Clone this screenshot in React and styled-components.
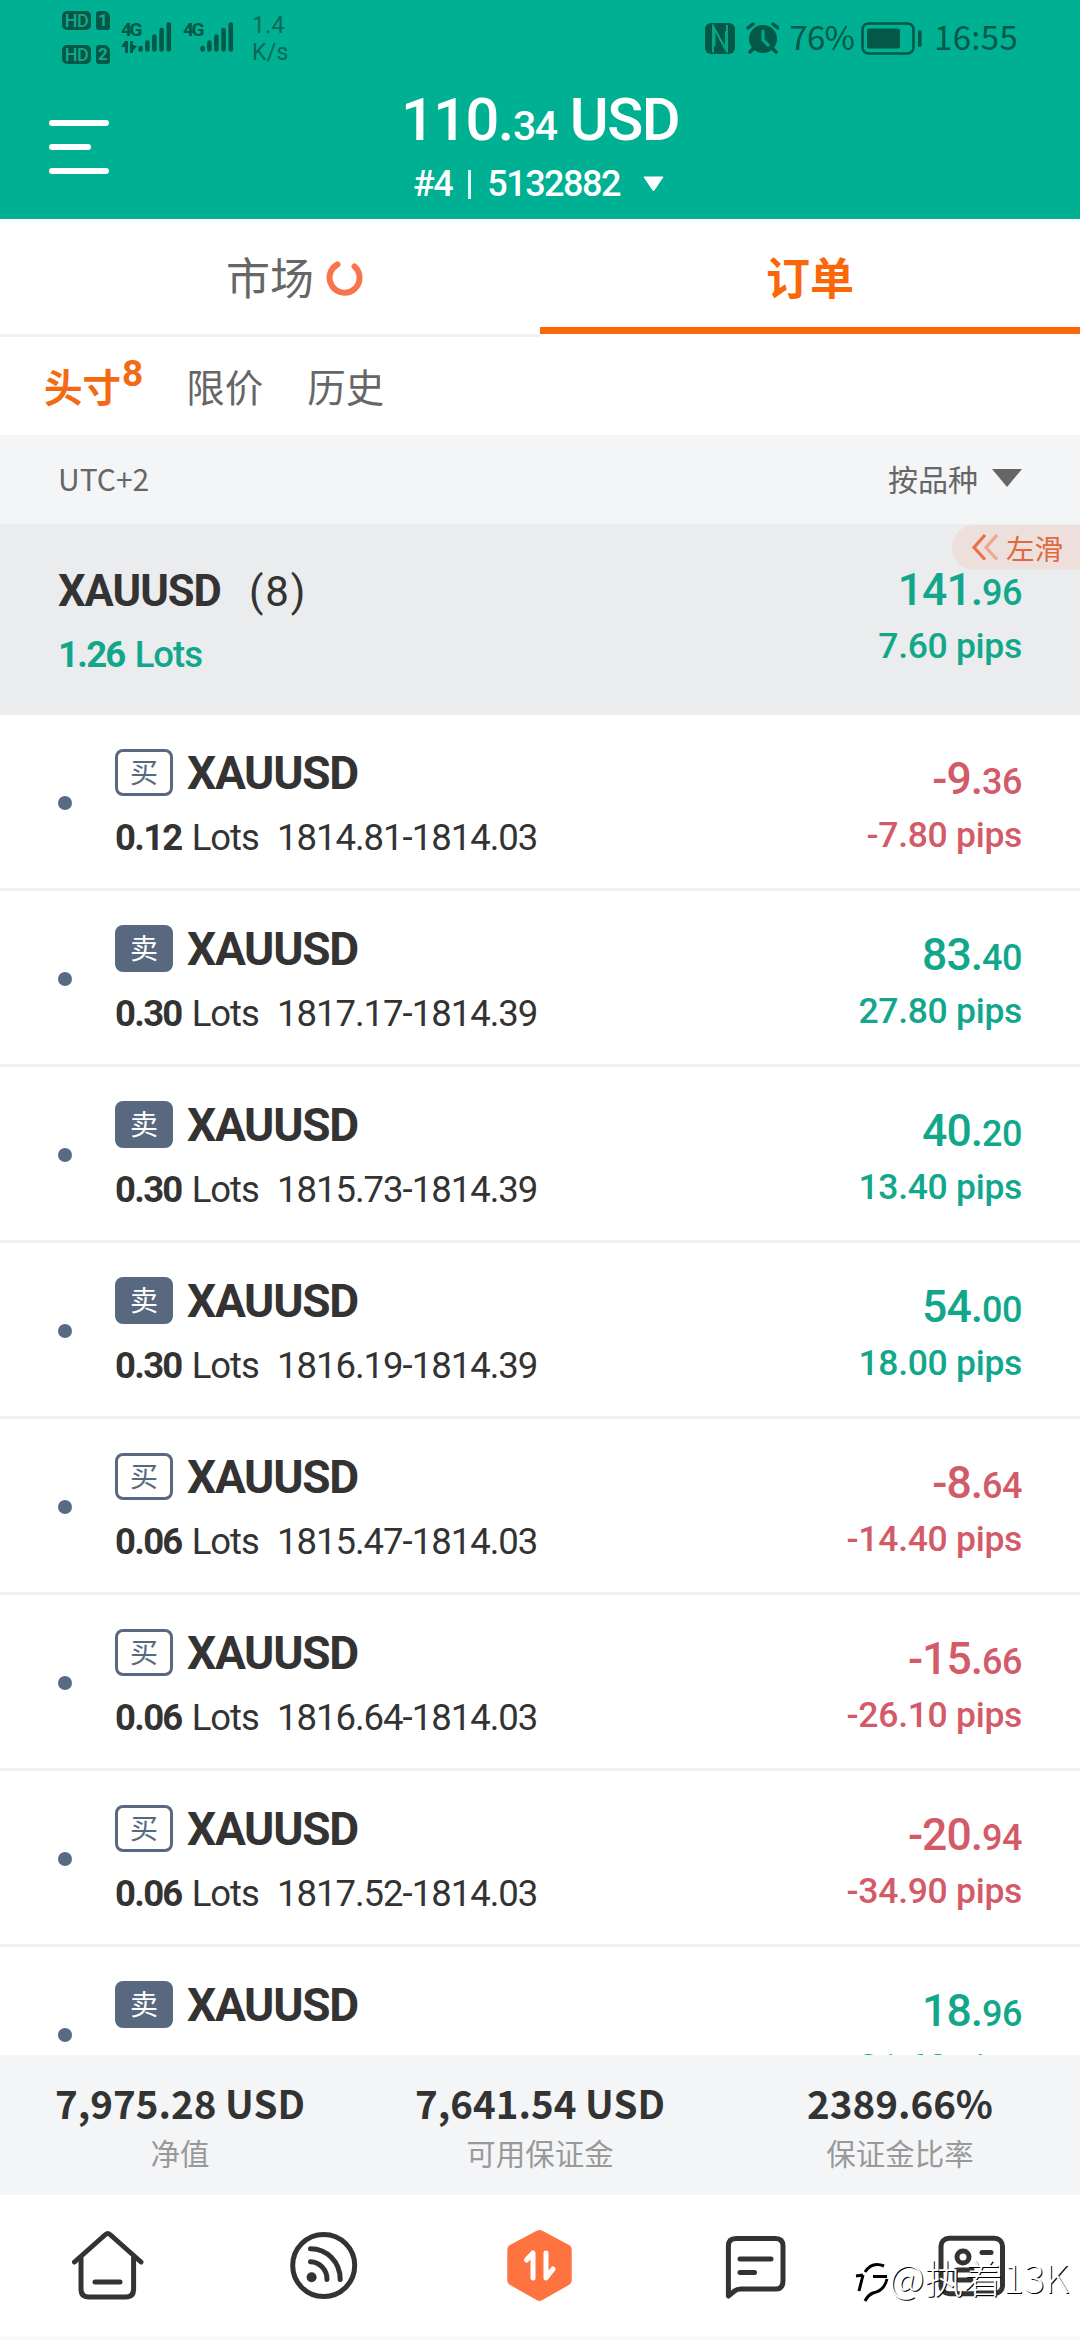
import React from "react";
import styled, { createGlobalStyle } from "styled-components";

const GlobalStyle = createGlobalStyle`
	* {
		box-sizing: border-box;
	}
	body {
		margin: 0;
		background-color: white;
	}
`;

const latin = `Roboto, "Noto Sans CJK SC", sans-serif`;
const cjk = `"Noto Sans CJK SC", sans-serif`;

const green = "#12a78b";
const red = "#d35a68";
const orange = "#fa6608";
const slate = "#58697f";
const ink = "#333333";

const Screen = styled.div`
	width: 1080px;
	height: 2340px;
	display: flex;
	flex-direction: column;
	overflow: hidden;
	background-color: white;
	font-family: ${latin};
	color: ${ink};
	white-space: nowrap;
`;

const Header = styled.header`
	height: 219px;
	flex: none;
	background-color: #00b093;
	color: white;
`;

const StatusBar = styled.div`
	height: 84px;
	padding: 11px 62px 0 62px;
	display: flex;
	align-items: flex-start;
	color: #045847;
`;

const SimColumn = styled.div`
	display: grid;
	grid-template-columns: 29px 14px;
	gap: 15px 5px;
	margin-right: 11px;
`;

const SimTag = styled.span`
	height: 19px;
	border-radius: ${(props) => (props.$card ? "3px 6px 3px 3px" : "5px")};
	background-color: #045847;
	color: #14a98c;
	font-size: ${(props) => (props.$card ? "17px" : "18px")};
	font-weight: ${(props) => (props.$card ? 700 : 500)};
	line-height: 19px;
	text-align: center;
	letter-spacing: ${(props) => (props.$card ? "0" : "-0.5px")};
`;

const Signal = styled.div`
	display: flex;
	margin-top: 11px;
	margin-right: ${(props) => props.$after};
	svg {
		display: block;
	}
`;

const NetType = styled.div`
	width: ${(props) => props.$w};
	font-size: 19px;
	font-weight: 700;
	line-height: 15px;
	letter-spacing: -2.5px;
	svg {
		margin-top: 4px;
	}
`;

const Speed = styled.div`
	margin-top: 1px;
	font-size: 23px;
	line-height: 27px;
	letter-spacing: 0.3px;
	color: #066a56;
`;

const StatusRight = styled.div`
	margin-left: auto;
	margin-top: 9px;
	height: 36px;
	display: flex;
	align-items: center;
	font-family: ${cjk};
	font-size: 33px;
	line-height: 32px;
	svg {
		display: block;
		flex: none;
	}
`;

const StatusText = styled.span`
	margin: 0 ${(props) => props.$r} 5px ${(props) => props.$l};
	letter-spacing: ${(props) => props.$spacing};
`;

const HeaderMain = styled.div`
	display: grid;
	grid-template-columns: 200px 1fr 200px;
`;

const Menu = styled.button`
	display: flex;
	flex-direction: column;
	gap: 18px;
	margin: 36px 0 0 49px;
	padding: 0;
	border: none;
	background: none;
	span {
		width: 60px;
		height: 6px;
		border-radius: 3px;
		background-color: white;
	}
	span:nth-child(2) {
		width: 42px;
	}
`;

const Account = styled.div`
	display: flex;
	flex-direction: column;
	align-items: center;
`;

const Balance = styled.div`
	font-size: 59.5px;
	font-weight: 500;
	line-height: 72px;
	letter-spacing: -1.5px;
	small {
		font-size: 41px;
		line-height: 1;
	}
`;

const AccountLine = styled.div`
	display: flex;
	align-items: center;
	margin-top: 6px;
	padding-right: 2px;
	font-size: 36px;
	font-weight: 500;
	line-height: 44px;
	letter-spacing: -1.5px;
	i {
		width: 3px;
		height: 29px;
		margin: 0 16px;
		background-color: #d9fff8;
	}
	svg {
		margin-left: 22px;
	}
`;

const Tabs = styled.nav`
	display: grid;
	grid-template-columns: 1fr 1fr;
	height: 118px;
	flex: none;
`;

const Tab = styled.div`
	display: flex;
	justify-content: center;
	height: ${(props) => (props.$active ? "115px" : "118px")};
	border-bottom: ${(props) =>
		props.$active ? `7px solid ${orange}` : "3px solid #f1f1f1"};
	font-family: ${cjk};
	font-size: 44px;
	font-weight: ${(props) => (props.$active ? 700 : 400)};
	line-height: 114px;
	color: ${(props) => (props.$active ? orange : "#666666")};
	div {
		position: relative;
	}
	svg {
		position: absolute;
		left: 100px;
		top: 40px;
	}
`;

const SubTabs = styled.div`
	display: flex;
	height: 98px;
	flex: none;
	padding-left: 44px;
	font-family: ${cjk};
	font-size: 38.5px;
	line-height: 96px;
	color: #666666;
`;

const SubTab = styled.div`
	display: flex;
	margin-right: ${(props) => (props.$active ? "43px" : "44px")};
	color: ${(props) => (props.$active ? "#f26a13" : "inherit")};
	font-weight: ${(props) => (props.$active ? 700 : 400)};
	sup {
		margin-left: 1px;
		font-family: ${latin};
		font-size: 37px;
		line-height: 73px;
	}
`;

const SortBar = styled.div`
	display: flex;
	align-items: center;
	justify-content: space-between;
	height: 89px;
	flex: none;
	padding: 0 58px 3px;
	background-color: #f4f5f7;
	font-family: ${cjk};
	font-size: 30px;
	color: #666666;
	div {
		display: flex;
		align-items: center;
		gap: 14px;
	}
`;

const List = styled.div`
	display: flex;
	flex-direction: column;
	height: 1531px;
	flex: none;
	overflow: hidden;
`;

const Group = styled.div`
	position: relative;
	display: flex;
	justify-content: space-between;
	height: 191px;
	flex: none;
	padding: 44px 58px 0;
	background-color: #eaeced;
`;

const SwipeHint = styled.div`
	position: absolute;
	top: 1px;
	right: 0;
	display: flex;
	align-items: center;
	gap: 7px;
	width: 128px;
	height: 45px;
	padding-left: 19px;
	border-radius: 23px 0 0 23px;
	background-color: #eddfdc;
	font-family: ${cjk};
	font-size: 28.5px;
	line-height: 42px;
	color: #e0693d;
`;

const Symbol = styled.span`
	font-size: ${(props) => (props.$size ? props.$size : "46px")};
	font-weight: 700;
	line-height: 48px;
	letter-spacing: ${(props) => (props.$size ? "-1px" : "-1.3px")};
`;

const Count = styled.span`
	margin-left: 28px;
	font-size: 42px;
	line-height: 48px;
	letter-spacing: 2px;
`;

const Lots = styled.div`
	display: flex;
	margin-top: ${(props) => (props.$total ? "17px" : "19px")};
	font-size: 36.5px;
	font-weight: ${(props) => (props.$total ? 500 : 400)};
	line-height: 44px;
	letter-spacing: -1px;
	color: ${(props) => (props.$total ? green : ink)};
	b {
		font-weight: 700;
		letter-spacing: -1.7px;
	}
	span {
		margin-left: 10px;
	}
	span + span {
		margin-left: 18px;
	}
`;

const Result = styled.div`
	display: flex;
	flex-direction: column;
	align-items: flex-end;
	margin-left: auto;
	padding-top: ${(props) => props.$top};
	color: ${(props) => (props.$loss ? red : green)};
	font-weight: 500;
`;

const Profit = styled.div`
	font-size: 44.5px;
	line-height: 44px;
	letter-spacing: -1px;
	small {
		font-size: 36px;
		line-height: 1;
		letter-spacing: -0.5px;
	}
`;

const Pips = styled.div`
	margin-top: 12px;
	font-size: 35.5px;
	line-height: 44px;
	letter-spacing: -0.3px;
`;

const Row = styled.div`
	display: flex;
	height: 176px;
	flex: none;
	padding: 0 58px;
	border-bottom: 3px solid #f1f1f1;
`;

const Dot = styled.span`
	width: 14px;
	height: 14px;
	margin: 81px 43px 0 0;
	border-radius: 50%;
	background-color: #586a84;
`;

const Position = styled.div`
	padding-top: 34px;
`;

const SymbolLine = styled.div`
	display: flex;
	height: 48px;
`;

const Side = styled.span`
	width: 58px;
	height: 47px;
	margin-right: 14px;
	border: 3px solid ${slate};
	border-radius: 8px;
	background-color: ${(props) => (props.$sell ? slate : "white")};
	color: ${(props) => (props.$sell ? "white" : slate)};
	font-family: ${cjk};
	font-size: 28px;
	line-height: 39px;
	text-align: center;
`;

const Summary = styled.div`
	display: grid;
	grid-template-columns: repeat(3, 1fr);
	height: 140px;
	flex: none;
	padding-top: 26px;
	background-color: #f4f5f7;
	font-family: ${cjk};
	text-align: center;
	strong {
		display: block;
		font-size: 38.5px;
		line-height: 42px;
	}
	span {
		display: block;
		margin-top: 8px;
		font-size: 29.5px;
		line-height: 42px;
		color: #999999;
	}
`;

const BottomNav = styled.nav`
	position: relative;
	display: grid;
	grid-template-columns: repeat(5, 1fr);
	justify-items: center;
	height: 145px;
	flex: none;
	padding-top: 34px;
	border-bottom: 4px solid #fafafa;
`;

const NavIcon = styled.svg`
	width: 72px;
	height: 74px;
	fill: none;
	stroke: ${ink};
	stroke-width: 5;
	stroke-linecap: round;
	stroke-linejoin: round;
`;

const Watermark = styled.div`
	position: absolute;
	right: 11px;
	top: 55px;
	display: flex;
	align-items: center;
	font-family: ${cjk};
	font-size: 39px;
	font-weight: 300;
	line-height: 44px;
	color: white;
	text-shadow: 1px 1px 0 #000000;
	svg {
		margin-top: 10px;
	}
	span {
		letter-spacing: 0.1px;
	}
`;

const positions = [
	{ side: "buy", lots: "0.12", price: "1814.81-1814.03", profit: "-9.36", pips: "-7.80" },
	{ side: "sell", lots: "0.30", price: "1817.17-1814.39", profit: "83.40", pips: "27.80" },
	{ side: "sell", lots: "0.30", price: "1815.73-1814.39", profit: "40.20", pips: "13.40" },
	{ side: "sell", lots: "0.30", price: "1816.19-1814.39", profit: "54.00", pips: "18.00" },
	{ side: "buy", lots: "0.06", price: "1815.47-1814.03", profit: "-8.64", pips: "-14.40" },
	{ side: "buy", lots: "0.06", price: "1816.64-1814.03", profit: "-15.66", pips: "-26.10" },
	{ side: "buy", lots: "0.06", price: "1817.52-1814.03", profit: "-20.94", pips: "-34.90" },
	{ side: "sell", lots: "0.06", price: "1817.55-1814.39", profit: "18.96", pips: "31.60" },
];

const SignalBars = () => (
	<svg width="34" height="30" stroke="#045847" strokeWidth="4.6" strokeLinecap="round">
		<path d="M2.6 26v1.5M9.4 20.5v7M16.4 14.5v13M23.6 8v19.5M30.8 2.5v25" />
	</svg>
);

const Money = ({ value }) => {
	const [whole, cents] = value.split(".");
	return (
		<>
			{whole}.<small>{cents}</small>
		</>
	);
};

const PositionRow = ({ item }) => (
	<Row>
		<Dot />
		<Position>
			<SymbolLine>
				<Side $sell={item.side === "sell"}>{item.side === "sell" ? "卖" : "买"}</Side>
				<Symbol>XAUUSD</Symbol>
			</SymbolLine>
			<Lots>
				<b>{item.lots}</b>
				<span>Lots</span>
				<span>{item.price}</span>
			</Lots>
		</Position>
		<Result $top="42px" $loss={item.profit.startsWith("-")}>
			<Profit>
				<Money value={item.profit} />
			</Profit>
			<Pips>{item.pips} pips</Pips>
		</Result>
	</Row>
);

const Status = () => (
	<StatusBar>
		<SimColumn>
			<SimTag>HD</SimTag>
			<SimTag $card>1</SimTag>
			<SimTag>HD</SimTag>
			<SimTag $card>2</SimTag>
		</SimColumn>
		<Signal $after="11px">
			<NetType $w="17px">
				4G
				<svg width="16" height="12" fill="#045847">
					<path d="M4 0h3v12H4V6H0zM9 0h3v4l4 1-4 5v2H9z" />
				</svg>
			</NetType>
			<SignalBars />
		</Signal>
		<Signal $after="18px">
			<NetType $w="17px">4G</NetType>
			<SignalBars />
		</Signal>
		<Speed>
			1.4
			<br />
			K/s
		</Speed>
		<StatusRight>
			<svg width="30" height="31" viewBox="0 0 30 31">
				<rect width="30" height="31" rx="6" fill="#045847" />
				<path
					d="M8 1.5v28M8 3l13 24V8M22 29.5V2M22 28L9.5 6v17"
					fill="none"
					stroke="#06a488"
					strokeWidth="2"
				/>
			</svg>
			<svg width="44" height="32" viewBox="-11 0 44 32">
				<circle cx="17" cy="17" r="14" fill="#045847" />
				<path
					d="M2 6l5-4M32 6l-5-4M7 27l-3 3M27 27l3 3"
					stroke="#045847"
					strokeWidth="3.5"
					strokeLinecap="round"
				/>
				<path d="M17 9v9l5 5" fill="none" stroke="#06a488" strokeWidth="3.2" strokeLinecap="round" />
			</svg>
			<StatusText $l="10px" $r="7px" $spacing="-0.8px">
				76%
			</StatusText>
			<svg width="61" height="33" viewBox="0 0 61 33">
				<rect x="1.5" y="1.5" width="51" height="30" rx="6" fill="none" stroke="#045847" strokeWidth="2.6" />
				<rect x="6" y="6.5" width="33" height="20" rx="2" fill="#045847" />
				<rect x="57" y="8" width="3.6" height="17" rx="1.8" fill="#045847" />
			</svg>
			<StatusText $l="12px" $r="0" $spacing="0.3px">
				16:55
			</StatusText>
		</StatusRight>
	</StatusBar>
);

const App = () => {
	return (
		<Screen>
			<GlobalStyle />
			<Header>
				<Status />
				<HeaderMain>
					<Menu>
						<span />
						<span />
						<span />
					</Menu>
					<Account>
						<Balance>
							<Money value="110.34" /> USD
						</Balance>
						<AccountLine>
							#4
							<i />
							5132882
							<svg width="23" height="16">
								<path d="M2 1h19L11.500 15z" fill="white" stroke="white" strokeLinejoin="round" />
							</svg>
						</AccountLine>
					</Account>
				</HeaderMain>
			</Header>

			<Tabs>
				<Tab>
					<div>
						市场
						<svg width="38" height="38" fill="none">
							<path
								d="M11.500 5.500A15 15 0 1 0 28.500 7.500"
								stroke="#f8744c"
								strokeWidth="6"
								strokeLinecap="round"
							/>
						</svg>
					</div>
				</Tab>
				<Tab $active>订单</Tab>
			</Tabs>

			<SubTabs>
				<SubTab $active>
					头寸<sup>8</sup>
				</SubTab>
				<SubTab>限价</SubTab>
				<SubTab>历史</SubTab>
			</SubTabs>

			<SortBar>
				<span>UTC+2</span>
				<div>
					按品种
					<svg width="30" height="18">
						<path d="M0 0h30L15 18z" fill="#666666" />
					</svg>
				</div>
			</SortBar>

			<List>
				<Group>
					<div>
						<Symbol $size="43.5px">XAUUSD</Symbol>
						<Count>(8)</Count>
						<Lots $total>
							<b>1.26</b>
							<span>Lots</span>
						</Lots>
					</div>
					<Result $top="0">
						<Profit>
							<Money value="141.96" />
						</Profit>
						<Pips>7.60 pips</Pips>
					</Result>
					<SwipeHint>
						<svg width="28" height="27" fill="none" strokeWidth="3.2">
							<path d="M26 1L15 13.500 26 25.500" stroke="#f0a78f" />
							<path d="M14 1L3 13.500 14 25.500" stroke="#ee6f49" />
						</svg>
						左滑
					</SwipeHint>
				</Group>
				{positions.map((item) => (
					<PositionRow key={item.price} item={item} />
				))}
			</List>

			<Summary>
				<div>
					<strong>7,975.28 USD</strong>
					<span>净值</span>
				</div>
				<div>
					<strong>7,641.54 USD</strong>
					<span>可用保证金</span>
				</div>
				<div>
					<strong>2389.66%</strong>
					<span>保证金比率</span>
				</div>
			</Summary>

			<BottomNav>
				<NavIcon>
					<path d="M2.500 33L33.500 5.500Q35.800 3.500 38 5.500L69 33" />
					<path d="M9 29V60Q9 68 17 68H53.600Q61.600 68 61.600 60V29M23 53H48" />
				</NavIcon>
				<NavIcon>
					<circle cx="35.7" cy="36.5" r="31" />
					<circle cx="23.6" cy="48.3" r="5" fill={ink} stroke="none" />
					<path d="M22.500 32.700A17 17.500 0 0 1 39 50.500M22.500 19.700C39 19.700 52.200 33 52.200 50.500" />
				</NavIcon>
				<NavIcon>
					<path
						d="M35.500 6L62.700 20.500V51.500L35.500 67L8.300 51.500V20.500Z"
						fill="#ff7340"
						stroke="#ff7340"
						strokeWidth="10"
					/>
					<path d="M22.500 31L29 24V49M42 24V49L49 40" stroke="white" />
				</NavIcon>
				<NavIcon>
					<path d="M8.400 67V17Q8.400 9.400 16 9.400H55.500Q63 9.400 63 17V52Q63 60 55.500 60H21Q17 60 14.500 62Z" />
					<path d="M20 30H51M20 43.500H34.500" />
				</NavIcon>
				<NavIcon>
					<rect x="5" y="9.2" width="61.500" height="55.500" rx="8" />
					<circle cx="27" cy="28" r="6" />
					<path d="M46 23.500H55M19 51V44Q19 41 22 41H36M22 51H35" />
				</NavIcon>
				<Watermark>
					<svg width="34" height="42" fill="none" stroke="black" strokeWidth="3">
						<path d="M1 16L8 15M8 15L4 31M10 12Q17 1 29 6M18 16.500H32M32 19Q29 31 18 33Q13 35 10 41" />
					</svg>
					<span>@执着13K</span>
				</Watermark>
			</BottomNav>
		</Screen>
	);
};

export default App;
